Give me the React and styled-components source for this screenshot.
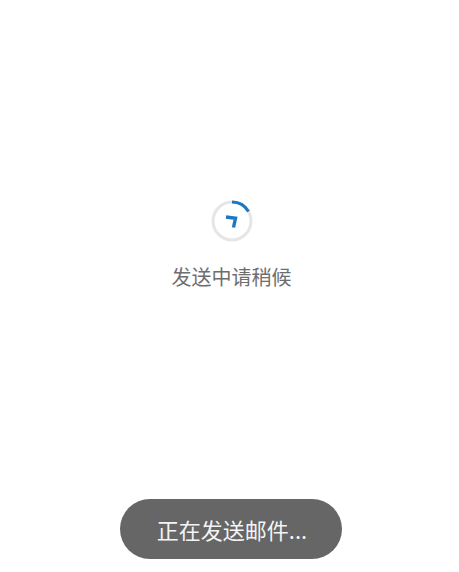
import styled, { createGlobalStyle } from 'styled-components';

const GlobalStyle = createGlobalStyle`
  html, body {
    margin: 0;
    padding: 0;
    background: #fff;
  }
`;

const App = () => {
  return (
    <>
      <GlobalStyle />
      <Page>
        <Loading>
          <Spinner viewBox="0 0 44 44">
            <circle cx="22" cy="22" r="19" fill="none" stroke="#e6e6e6" strokeWidth="3" />
            <path d="M22 3 A19 19 0 0 1 38.5 12.5" fill="none" stroke="#1b78c4" strokeWidth="3.2" />
            <path d="M16 18 L25.5 19.2 L23.5 28.5" fill="none" stroke="#1b78c4" strokeWidth="3.4" />
          </Spinner>
          <LoadingText>发送中请稍候</LoadingText>
        </Loading>
        <Toast>正在发送邮件...</Toast>
      </Page>
    </>
  );
};

export default App;

const Page = styled.div`
  width: 459px;
  height: 572px;
  box-sizing: border-box;
  padding: 199px 0 13px;
  display: flex;
  flex-direction: column;
  align-items: center;
  overflow: hidden;
  font-family: 'Noto Sans CJK SC', 'Liberation Sans', sans-serif;
`;

const Loading = styled.div`
  display: flex;
  flex-direction: column;
  align-items: center;
  margin-left: 4px;
`;

const Spinner = styled.svg`
  width: 44px;
  height: 44px;
`;

const LoadingText = styled.div`
  margin-top: 19px;
  font-size: 20px;
  line-height: 30px;
  color: #6e6e6e;
`;

const Toast = styled.div`
  margin-top: auto;
  margin-left: 3px;
  padding-left: 2px;
  box-sizing: border-box;
  width: 222px;
  height: 60px;
  border-radius: 30px;
  background: #666;
  color: #f4f4f4;
  font-size: 22px;
  line-height: 60px;
  text-align: center;
`;
